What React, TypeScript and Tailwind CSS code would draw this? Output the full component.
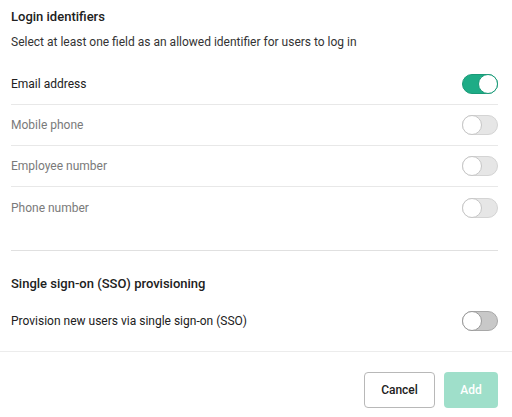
function Toggle({ on, disabled }: { on?: boolean; disabled?: boolean }) {
  const track = on
    ? "bg-[#1eac86] border-[#1a9a78]"
    : disabled
    ? "bg-[#e6e6e6] border-[#d4d4d4]"
    : "bg-[#c8c8c8] border-[#a8a8a8]";
  return (
    <div
      className={`relative h-[20px] w-[36px] rounded-full border ${track} flex items-center ${
        on ? "justify-end" : "justify-start"
      }`}
    >
      <div
        className={`h-[20px] w-[20px] rounded-full bg-white border ${
          on ? "border-[#1a9a78]" : disabled ? "border-[#c6c6c6]" : "border-[#9a9a9a]"
        } -m-px`}
      />
    </div>
  );
}

function Row({ label, on, disabled, last }: { label: string; on?: boolean; disabled?: boolean; last?: boolean }) {
  return (
    <div
      className={`flex h-[41px] items-center justify-between ${last ? "" : "border-b border-[#e8e8e8]"}`}
    >
      <span className={`text-[12px] ${disabled ? "text-[#7a7a7a]" : "text-[#212121]"}`}>{label}</span>
      <Toggle on={on} disabled={disabled} />
    </div>
  );
}

export default function App() {
  return (
    <div className="w-[512px] h-[417px] bg-white flex flex-col" style={{ fontFamily: "Roboto, sans-serif" }}>
      <div className="pl-[11px] pr-[14px]">
        <h2 className="pt-[8px] text-[13px] font-medium leading-[18px] text-[#212121]">Login identifiers</h2>
        <p className="mt-[7px] text-[12px] leading-[18px] text-[#333]">
          Select at least one field as an allowed identifier for users to log in
        </p>
        <div className="mt-[13px]">
          <Row label="Email address" on />
          <Row label="Mobile phone" disabled />
          <Row label="Employee number" disabled />
          <Row label="Phone number" disabled last />
        </div>
        <div className="mt-[22px] border-b border-[#e0e0e0]" />
        <h2 className="mt-[24px] text-[13px] font-medium leading-[18px] text-[#212121]">
          Single sign-on (SSO) provisioning
        </h2>
        <div className="mt-[18px] flex items-center justify-between">
          <span className="text-[12px] text-[#212121]">Provision new users via single sign-on (SSO)</span>
          <Toggle />
        </div>
      </div>
      <div className="mt-[20px] border-b border-[#ececec]" />
      <div className="flex justify-end gap-[9px] pr-[14px] pt-[20px]">
        <button className="h-[36px] w-[71px] rounded-[4px] border border-[#b8b8b8] bg-white text-[12px] font-medium text-[#212121]">
          Cancel
        </button>
        <button className="h-[36px] w-[54px] rounded-[4px] bg-[#9fdfca] text-[12px] font-medium text-white">
          Add
        </button>
      </div>
    </div>
  );
}
